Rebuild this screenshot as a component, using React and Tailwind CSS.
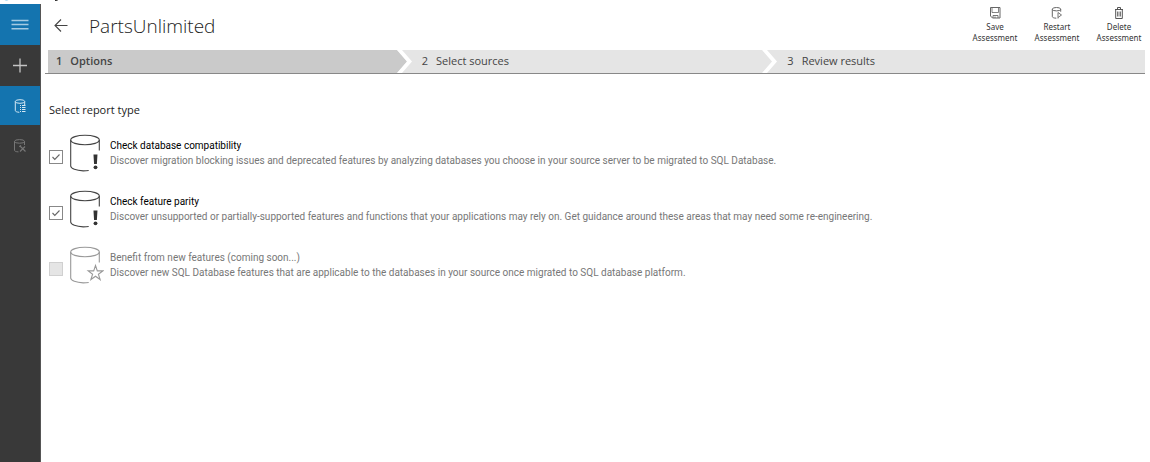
import React from "react";

function MenuIcon() {
  return (
    <svg width="18" height="14" viewBox="0 0 18 14" stroke="#a5cbe2" strokeWidth="1.4" fill="none" aria-hidden="true">
      <path d="M0.500 2.500h17M0.500 6.500h17M0.500 10.700h17" />
    </svg>
  );
}

function PlusIcon() {
  return (
    <svg width="16" height="16" viewBox="0 0 16 16" stroke="#c4c4c4" strokeWidth="1.300" fill="none" aria-hidden="true">
      <path d="M1 7.500h14M8 0.500v14" />
    </svg>
  );
}

function DatabaseListIcon() {
  return (
    <svg width="14" height="16" viewBox="0 0 14 16" stroke="#d5e8f4" fill="none" aria-hidden="true">
      <ellipse cx="7" cy="3.500" rx="4.700" ry="1.800" />
      <path d="M2.300 3.500v9c0 1 1.500 1.600 4 1.800M11.700 3.500v3.500" />
      <path d="M7 7.500h1M9 7.500h3.500M7 9.500h1M9 9.500h3.500M7 11.500h1M9 11.500h3.500M7 13.500h1M9 13.500h3.500" strokeWidth="1.200" />
    </svg>
  );
}

function DatabaseToolsIcon() {
  return (
    <svg width="14" height="16" viewBox="0 0 14 16" stroke="#777" fill="none" aria-hidden="true">
      <ellipse cx="6.500" cy="3.400" rx="5" ry="1.800" />
      <path d="M1.500 3.400v8.800c0 1 1.400 1.600 4 1.700M11.500 3.400v3.600" />
      <path d="M7 8l5.500 5.500M12 8.500l-5 5M6.300 8.800l1.600-1.400" strokeWidth="1.200" />
    </svg>
  );
}

function BackIcon() {
  return (
    <svg width="14" height="14" viewBox="0 0 14 14" stroke="#444" strokeWidth="1.100" fill="none" aria-hidden="true">
      <path d="M13.500 6.500H1M7 0.500l-6 6 6 6" />
    </svg>
  );
}

function SaveIcon() {
  return (
    <svg width="12" height="12" viewBox="0 0 12 12" stroke="#666" fill="none" aria-hidden="true">
      <path d="M1.500 .5h9.500v10.500H3.500l-2-2z" />
      <path d="M3 .5v5h6.500v-5" strokeWidth=".8" />
      <path d="M4 11V8.500h5V11M6 9.500V11" strokeWidth=".9" />
    </svg>
  );
}

function RestartIcon() {
  return (
    <svg width="12" height="12" viewBox="0 0 12 12" stroke="#666" fill="none" aria-hidden="true">
      <ellipse cx="5.500" cy="2.200" rx="4.200" ry="1.700" />
      <path d="M1.300 2.200v7.300c0 1 1.600 1.600 4 1.700M9.700 2.200v2.500" />
      <path d="M7 11.500v-6l3.500 2.500L7 10.500" strokeWidth=".9" />
    </svg>
  );
}

function DeleteIcon() {
  return (
    <svg width="12" height="12" viewBox="0 0 12 12" stroke="#555" fill="none" aria-hidden="true">
      <path d="M2 2.500h8M4.500 2.500v-2h3v2M2.700 2.500v9h6.600v-9" />
      <path d="M4.500 4.500v5M6 4.500v5M7.500 4.500v5" strokeWidth=".8" />
    </svg>
  );
}

function ReportIcon({ kind }) {
  const star = kind === "star";
  return (
    <svg className="shrink-0" width="34" height="38" viewBox="0 0 34 38" stroke={star ? "#999" : "#444"} strokeWidth="1.100" fill="none" aria-hidden="true">
      <ellipse cx="15" cy="6" rx="14.300" ry="4.800" />
      <path d="M.7 6v26c0 2.600 5.500 4.700 12.500 4.900q3 0 5.500-.4M29.300 6v10.500" />
      {star ? (
        <path d="M25.500 19.500l1.800 5.400h5.500l-4.400 3.300 1.700 5.300-4.600-3.300-4.600 3.300 1.700-5.300-4.400-3.300h5.500z" />
      ) : (
        <g fill="#333" stroke="none">
          <path d="M23.500 20.500h4l-.6 9.500h-2.800z" />
          <circle cx="25.500" cy="33.300" r="1.900" />
        </g>
      )}
    </svg>
  );
}

function Step({ number, label, current, last }) {
  return (
    <li className={`flex min-w-0 flex-1 ${current ? "bg-[#cacaca]" : "bg-[#e5e5e5]"}`} aria-current={current ? "step" : undefined}>
      <div className={`flex min-w-0 flex-1 items-center gap-2 pl-2 text-[11px] text-[#444] ${current ? "font-semibold" : ""}`}>
        <span>{number}</span>
        <span>{label}</span>
      </div>
      {!last && (
        <svg className="shrink-0" width="17" height="23" viewBox="0 0 17 23" aria-hidden="true">
          <path d="M0 0h17v23H0l10-11.500z" fill="#e5e5e5" />
          <path d="M0 0h5l10 11.500L5 23H0l10-11.500z" fill="#fff" />
        </svg>
      )}
    </li>
  );
}

function Action({ icon, label }) {
  return (
    <button type="button" className="flex w-12 flex-col items-center font-['Noto_Sans',sans-serif] text-[8px] leading-[11px] text-[#333]">
      {icon}
      <span className="mt-[2px]">{label}</span>
      <span>Assessment</span>
    </button>
  );
}

function Option({ id, title, text, kind, checked, disabled }) {
  return (
    <li className="flex h-14 items-start">
      <span className="mt-4 grid shrink-0">
        <input
          id={id}
          type="checkbox"
          defaultChecked={checked}
          disabled={disabled}
          className="peer col-start-1 row-start-1 size-[14px] appearance-none border border-[#888] bg-white disabled:border-[#d0d0d0] disabled:bg-[#e5e5e5]"
        />
        <svg className="pointer-events-none invisible col-start-1 row-start-1 peer-checked:visible" width="14" height="14" viewBox="0 0 14 14" stroke="#666" strokeWidth="1.100" fill="none" aria-hidden="true">
          <path d="M3.500 7l2.300 2.400L10.500 4.500" />
        </svg>
      </span>
      <span className="ml-[7px] flex shrink-0">
        <ReportIcon kind={kind} />
      </span>
      <label htmlFor={id} className="mt-1 ml-[6px] font-['Roboto',sans-serif] text-[10px] leading-[15px]">
        <span className={`block ${disabled ? "text-[#777]" : "text-black"}`}>{title}</span>
        <span className="block text-[#777]">{text}</span>
      </label>
    </li>
  );
}

export default function App() {
  return (
    <div className="flex min-h-screen flex-col bg-white font-['Open_Sans','Noto_Sans',sans-serif]">
      <svg width="64" height="4" viewBox="0 0 64 4" aria-hidden="true">
        <path d="M4.500 0h4q-2 1.500-4 0" fill="#9bd3ef" />
        <path d="M55 0h3q0 1-3 1z" fill="#222" />
      </svg>
      <div className="flex flex-1">
        <nav className="flex w-[41px] shrink-0 flex-col border-r border-[#555] bg-[#393939]" aria-label="Main">
          <button type="button" aria-label="Menu" className="flex h-[41px] items-center justify-center bg-[#1474af]">
            <MenuIcon />
          </button>
          <button type="button" aria-label="New" className="flex h-[41px] items-center justify-center">
            <PlusIcon />
          </button>
          <button type="button" aria-label="Assessments" className="flex h-[39px] items-center justify-center bg-[#1474af]">
            <DatabaseListIcon />
          </button>
          <button type="button" aria-label="Migrations" disabled className="flex h-[41px] items-center justify-center">
            <DatabaseToolsIcon />
          </button>
        </nav>
        <main className="min-w-0 flex-1 pr-[5px] pl-1">
          <header className="flex h-[46px] items-start justify-between pl-2">
            <div className="flex items-center pt-1">
              <button type="button" aria-label="Back" className="p-px">
                <BackIcon />
              </button>
              <h1 className="ml-5 text-[19px] leading-9 font-light text-[#222]">PartsUnlimited</h1>
            </div>
            <div className="flex gap-[14px] pt-[3px] pr-[2px]">
              <Action icon={<SaveIcon />} label="Save" />
              <Action icon={<RestartIcon />} label="Restart" />
              <Action icon={<DeleteIcon />} label="Delete" />
            </div>
          </header>
          <div className="border-b border-[#888] pl-[3px]">
            <ol className="flex h-[23px]">
              <Step number="1" label="Options" current />
              <Step number="2" label="Select sources" />
              <Step number="3" label="Review results" last />
            </ol>
          </div>
          <section className="pl-1">
            <h2 className="mt-[26px] text-[11px] leading-5 text-[#222]">Select report type</h2>
            <ul className="mt-[14px]">
              <Option
                id="compatibility"
                title="Check database compatibility"
                text="Discover migration blocking issues and deprecated features by analyzing databases you choose in your source server to be migrated to SQL Database."
                checked
              />
              <Option
                id="parity"
                title="Check feature parity"
                text="Discover unsupported or partially-supported features and functions that your applications may rely on. Get guidance around these areas that may need some re-engineering."
                checked
              />
              <Option
                id="features"
                title="Benefit from new features (coming soon...)"
                text="Discover new SQL Database features that are applicable to the databases in your source once migrated to SQL database platform."
                kind="star"
                disabled
              />
            </ul>
          </section>
        </main>
      </div>
    </div>
  );
}
